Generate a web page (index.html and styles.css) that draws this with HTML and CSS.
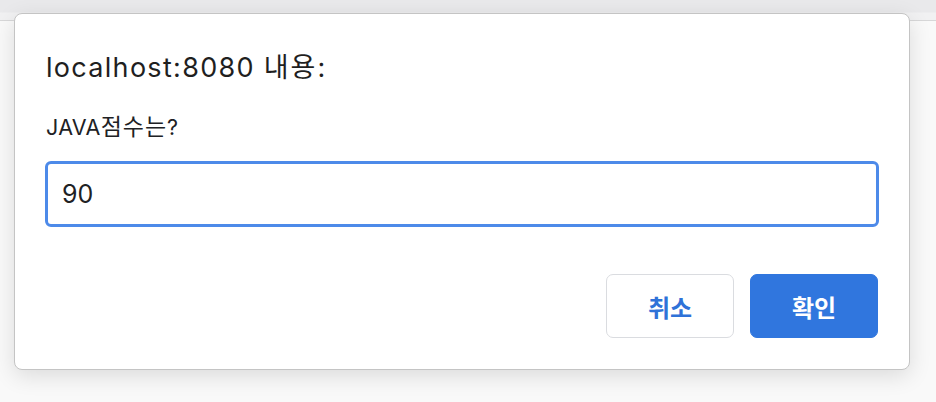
FILE: index.html
```html
<!DOCTYPE html>
<html lang="ko">
<head>
<meta charset="utf-8">
<title>prompt</title>
<link rel="stylesheet" href="styles.css">
</head>
<body>
<div class="topbar"></div>
<div class="page"></div>
<div class="dialog">
  <div class="title">localhost:8080 <span class="ko">내용</span>:</div>
  <div class="message">JAVA<span class="ko">점수는</span>?</div>
  <input class="field" type="text" value="90">
  <div class="actions">
    <button class="btn btn-cancel">취소</button>
    <button class="btn btn-ok">확인</button>
  </div>
</div>
</body>
</html>
```
FILE: styles.css
```css
html, body {
  margin: 0;
  padding: 0;
  width: 936px;
  height: 402px;
  overflow: hidden;
  background: #f9f9f9;
  font-family: Inter, "Noto Sans CJK KR", sans-serif;
}
.topbar {
  height: 20px;
  background: linear-gradient(#e9e9eb 0, #e9e9eb 12px, #f1f1f2 13px, #f1f1f2 100%);
  border-bottom: 1px solid #d7d7d8;
}
.page {
  height: 381px;
  background: #f9f9f9;
}
.dialog {
  position: absolute;
  left: 14px;
  top: 13px;
  width: 896px;
  box-sizing: border-box;
  background: #fff;
  border: 1px solid #c4c4c4;
  border-radius: 8px;
  box-shadow: 0 6px 22px rgba(0, 0, 0, 0.12);
  padding: 38px 31px 31px 31px;
  display: flex;
  flex-direction: column;
}
.title {
  font-size: 27px;
  line-height: 32px;
  letter-spacing: 1.3px;
  color: #1f1f1f;
}
.title .ko {
  letter-spacing: 2px;
}
.message {
  margin-top: 31px;
  font-size: 21.5px;
  line-height: 25px;
  letter-spacing: 0.3px;
  color: #202124;
}
.message .ko {
  font-size: 23px;
  letter-spacing: 1px;
}
.field {
  margin-top: 21px;
  margin-left: -1px;
  width: 834px;
  height: 66px;
  box-sizing: border-box;
  border: 3px solid #4d8ae9;
  border-radius: 6px;
  padding: 0 14px;
  font-family: inherit;
  font-size: 25px;
  color: #202124;
  outline: none;
  background: #fff;
}
.actions {
  margin-top: 47px;
  display: flex;
  justify-content: flex-end;
  gap: 16px;
}
.btn {
  width: 128px;
  height: 64px;
  box-sizing: border-box;
  border-radius: 7px;
  font-family: inherit;
  font-size: 24px;
  font-weight: bold;
  cursor: pointer;
}
.btn-cancel {
  background: #fff;
  border: 1px solid #dadce0;
  color: #2f72d8;
}
.btn-ok {
  background: #3076de;
  border: 1px solid #3076de;
  color: #fff;
}
```
